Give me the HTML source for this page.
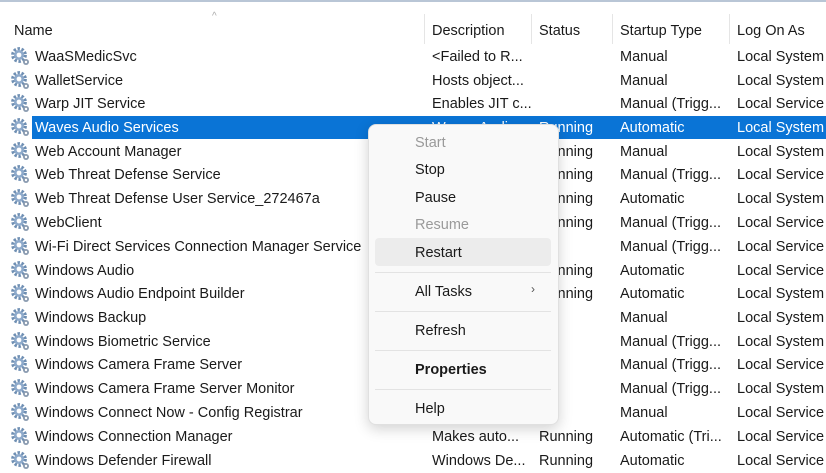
<!DOCTYPE html>
<html><head><meta charset="utf-8">
<style>
html,body{margin:0;padding:0;}
body{width:826px;height:473px;overflow:hidden;background:#fff;position:relative;font-family:"Liberation Sans",sans-serif;font-size:14.5px;color:#1a1a1a;}
.top{position:absolute;left:0;top:0;width:826px;height:2px;background:#b9c6d6;}
.hd{position:absolute;top:23px;}
.sep{position:absolute;top:14px;height:30px;width:1px;background:#e5e5e5;}
.r{position:absolute;left:0;width:826px;height:23px;}
.r span{position:absolute;top:5px;white-space:nowrap;}
.r svg{position:absolute;left:11px;top:3px;}
.c1{left:35px}.c2{left:432px}.c3{left:539px}.c4{left:620px}.c5{left:737px}
.sel{background:#0a74d6;left:32px;}
.sel2 span{color:#fff;}
.menu{position:absolute;left:368px;top:124px;width:189px;height:299px;background:#f9f9f9;border:1px solid #e0e0e0;border-radius:8px;box-shadow:0 4px 14px rgba(0,0,0,0.18);}
.mi{position:absolute;left:46px;white-space:nowrap;color:#1a1a1a;}
.dis{color:#9a9a9a;}
.hov{position:absolute;left:6px;top:113px;width:176px;height:28px;background:#ececec;border-radius:4px;}
.ms{position:absolute;left:6px;width:176px;height:1px;background:#e3e3e3;}
</style></head><body>
<div class="top"></div>
<div style="position:absolute;left:212px;top:11px;font-size:10px;color:#aaa;">^</div>
<div class="hd" style="left:14px">Name</div>
<div class="hd" style="left:432px">Description</div>
<div class="hd" style="left:539px">Status</div>
<div class="hd" style="left:620px">Startup Type</div>
<div class="hd" style="left:737px">Log On As</div>
<div class="sep" style="left:424px"></div>
<div class="sep" style="left:531px"></div>
<div class="sep" style="left:612px"></div>
<div class="sep" style="left:729px"></div>

<svg width="0" height="0" style="position:absolute"><defs>
<g id="g"><circle cx="8" cy="8" r="6.3" fill="none" stroke="#6f8fb3" stroke-width="3.2" stroke-dasharray="2.4 1.6"/><circle cx="8" cy="8" r="5" fill="#8eaacb"/><circle cx="8" cy="8" r="2.4" fill="#fff"/><circle cx="15" cy="15" r="3" fill="#8a9bb0"/><circle cx="15" cy="15" r="1.2" fill="#fff"/></g>
</defs></svg>

<div class="r" style="top:44px"><svg width="20" height="20"><use href="#g"/></svg><span class="c1">WaaSMedicSvc</span><span class="c2">&lt;Failed to R...</span><span class="c4">Manual</span><span class="c5">Local System</span></div>
<div class="r" style="top:68px"><svg width="20" height="20"><use href="#g"/></svg><span class="c1">WalletService</span><span class="c2">Hosts object...</span><span class="c4">Manual</span><span class="c5">Local System</span></div>
<div class="r" style="top:91px"><svg width="20" height="20"><use href="#g"/></svg><span class="c1">Warp JIT Service</span><span class="c2">Enables JIT c...</span><span class="c4">Manual (Trigg...</span><span class="c5">Local Service</span></div>
<div class="r sel" style="top:116px;width:794px;"></div>
<div class="r sel2" style="top:115px"><svg width="20" height="20"><use href="#g"/></svg><span class="c1">Waves Audio Services</span><span class="c2">Waves Audio...</span><span class="c3">Running</span><span class="c4">Automatic</span><span class="c5">Local System</span></div>
<div class="r" style="top:139px"><svg width="20" height="20"><use href="#g"/></svg><span class="c1">Web Account Manager</span><span class="c3">Running</span><span class="c4">Manual</span><span class="c5">Local System</span></div>
<div class="r" style="top:162px"><svg width="20" height="20"><use href="#g"/></svg><span class="c1">Web Threat Defense Service</span><span class="c3">Running</span><span class="c4">Manual (Trigg...</span><span class="c5">Local Service</span></div>
<div class="r" style="top:186px"><svg width="20" height="20"><use href="#g"/></svg><span class="c1">Web Threat Defense User Service_272467a</span><span class="c3">Running</span><span class="c4">Automatic</span><span class="c5">Local System</span></div>
<div class="r" style="top:210px"><svg width="20" height="20"><use href="#g"/></svg><span class="c1">WebClient</span><span class="c3">Running</span><span class="c4">Manual (Trigg...</span><span class="c5">Local Service</span></div>
<div class="r" style="top:234px"><svg width="20" height="20"><use href="#g"/></svg><span class="c1">Wi-Fi Direct Services Connection Manager Service</span><span class="c4">Manual (Trigg...</span><span class="c5">Local Service</span></div>
<div class="r" style="top:258px"><svg width="20" height="20"><use href="#g"/></svg><span class="c1">Windows Audio</span><span class="c3">Running</span><span class="c4">Automatic</span><span class="c5">Local Service</span></div>
<div class="r" style="top:281px"><svg width="20" height="20"><use href="#g"/></svg><span class="c1">Windows Audio Endpoint Builder</span><span class="c3">Running</span><span class="c4">Automatic</span><span class="c5">Local System</span></div>
<div class="r" style="top:305px"><svg width="20" height="20"><use href="#g"/></svg><span class="c1">Windows Backup</span><span class="c4">Manual</span><span class="c5">Local System</span></div>
<div class="r" style="top:329px"><svg width="20" height="20"><use href="#g"/></svg><span class="c1">Windows Biometric Service</span><span class="c4">Manual (Trigg...</span><span class="c5">Local System</span></div>
<div class="r" style="top:352px"><svg width="20" height="20"><use href="#g"/></svg><span class="c1">Windows Camera Frame Server</span><span class="c4">Manual (Trigg...</span><span class="c5">Local Service</span></div>
<div class="r" style="top:376px"><svg width="20" height="20"><use href="#g"/></svg><span class="c1">Windows Camera Frame Server Monitor</span><span class="c4">Manual (Trigg...</span><span class="c5">Local System</span></div>
<div class="r" style="top:400px"><svg width="20" height="20"><use href="#g"/></svg><span class="c1">Windows Connect Now - Config Registrar</span><span class="c4">Manual</span><span class="c5">Local Service</span></div>
<div class="r" style="top:424px"><svg width="20" height="20"><use href="#g"/></svg><span class="c1">Windows Connection Manager</span><span class="c2">Makes auto...</span><span class="c3">Running</span><span class="c4">Automatic (Tri...</span><span class="c5">Local Service</span></div>
<div class="r" style="top:448px"><svg width="20" height="20"><use href="#g"/></svg><span class="c1">Windows Defender Firewall</span><span class="c2">Windows De...</span><span class="c3">Running</span><span class="c4">Automatic</span><span class="c5">Local Service</span></div>

<div class="menu">
<div class="hov"></div>
<div class="mi dis" style="top:10px">Start</div>
<div class="mi" style="top:37px">Stop</div>
<div class="mi" style="top:65px">Pause</div>
<div class="mi dis" style="top:92px">Resume</div>
<div class="mi" style="top:120px">Restart</div>
<div class="ms" style="top:147px"></div>
<div class="mi" style="top:159px">All Tasks</div>
<div class="mi" style="top:157px;left:162px;font-size:12px;color:#555;">›</div>
<div class="ms" style="top:186px"></div>
<div class="mi" style="top:198px">Refresh</div>
<div class="ms" style="top:225px"></div>
<div class="mi" style="top:237px;font-weight:bold">Properties</div>
<div class="ms" style="top:264px"></div>
<div class="mi" style="top:276px">Help</div>
</div>
</body></html>
